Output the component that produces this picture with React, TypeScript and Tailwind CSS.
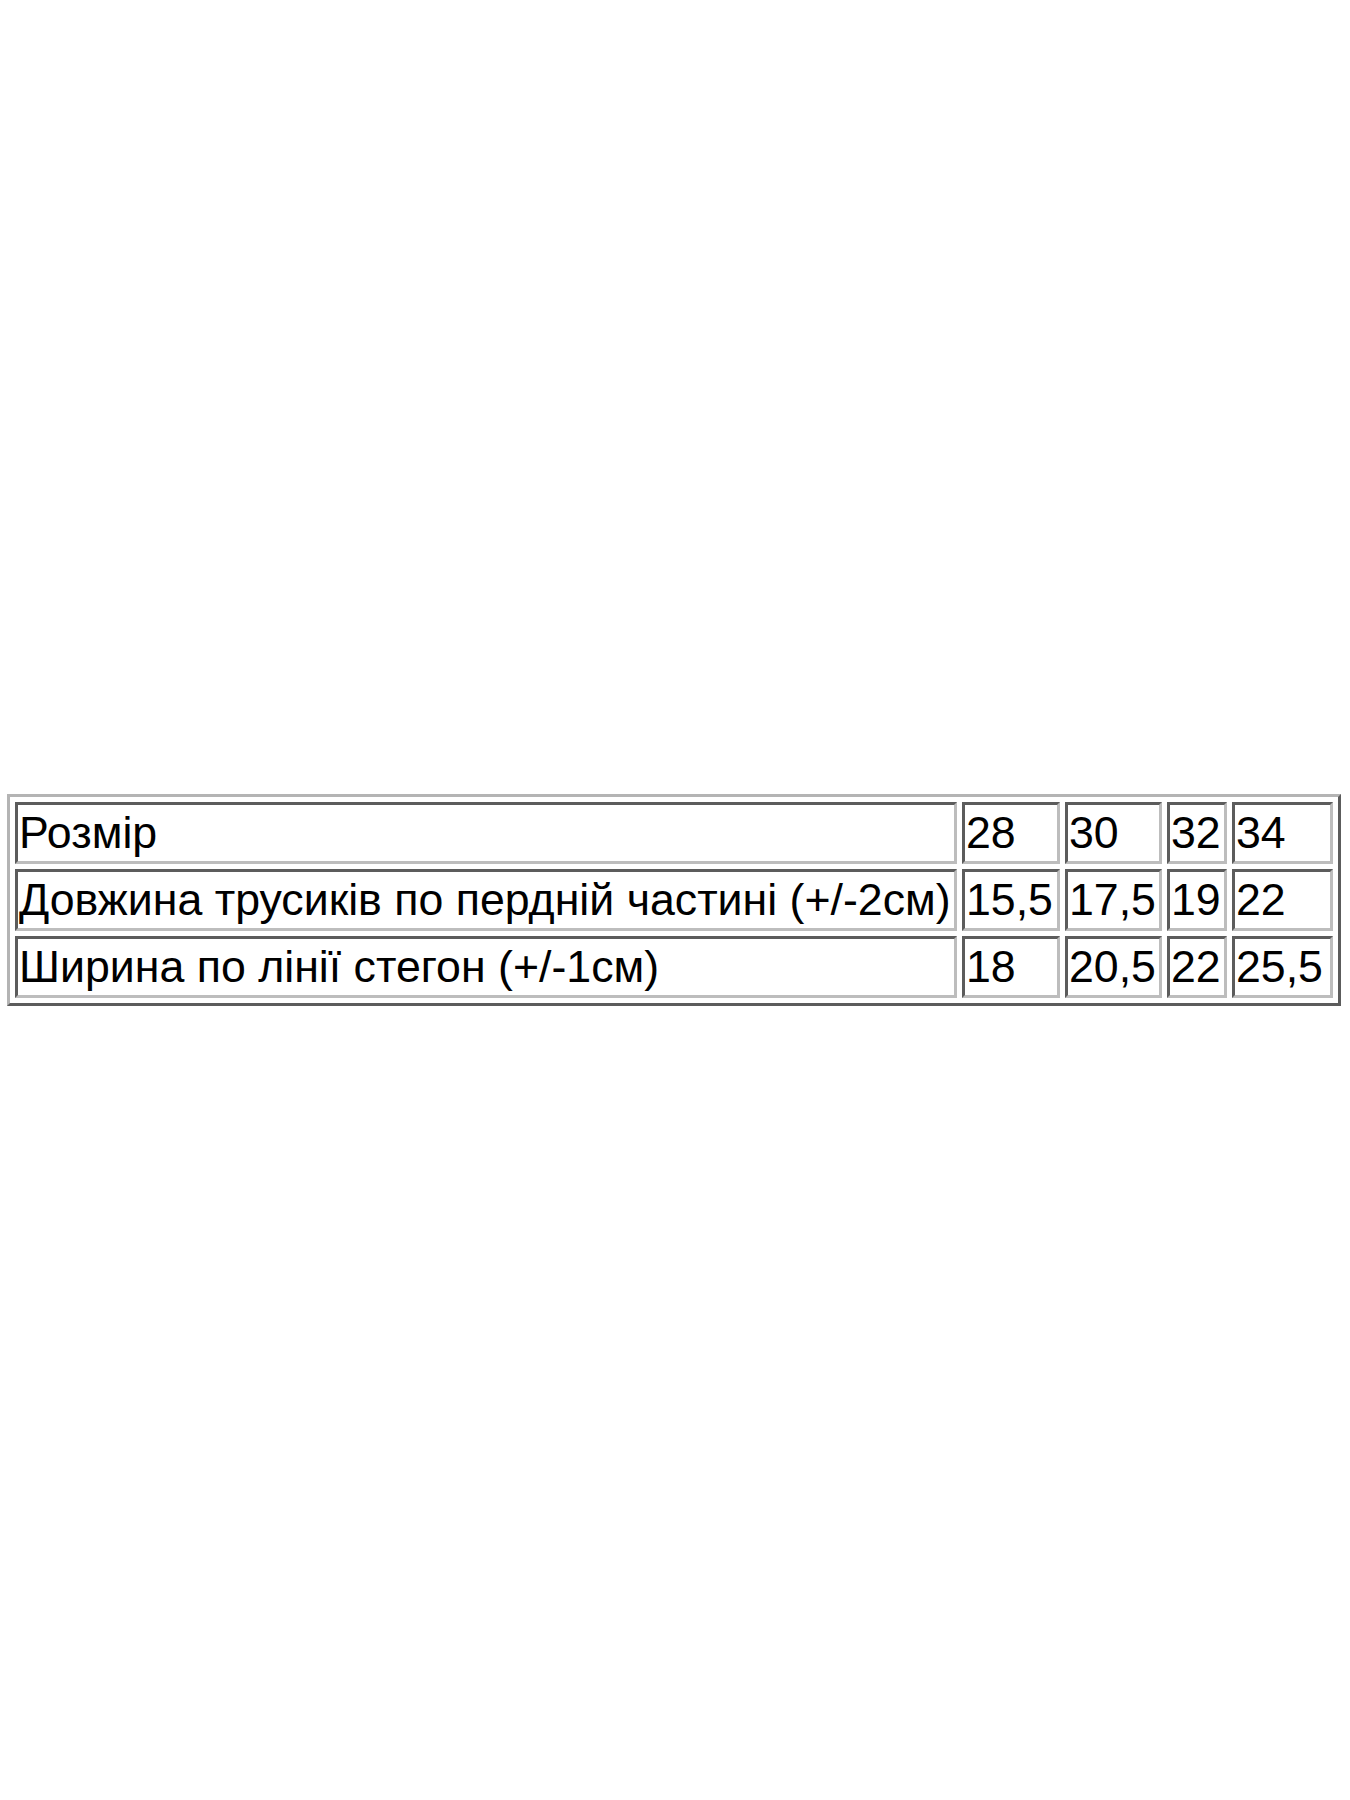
import React from "react";

const rows: string[][] = [
  ["Розмір", "28", "30", "32", "34"],
  ["Довжина трусиків по пердній частині (+/-2см)", "15,5", "17,5", "19", "22"],
  ["Ширина по лінії стегон (+/-1см)", "18", "20,5", "22", "25,5"],
];

const widths = ["w-[942px]", "w-[98px]", "w-[97px]", "w-[60px]", "w-[101px]"];

export default function App() {
  return (
    <div className="h-[1800px] w-[1350px] bg-white flex items-center">
      <table
        className="ml-[7px] border-separate border-spacing-[5px] border-[3px] border-t-[#b4b4b4] border-l-[#b4b4b4] border-r-[#5c5c5c] border-b-[#5c5c5c] text-black"
        style={{ fontFamily: '"Liberation Sans", Arial, sans-serif' }}
      >
        <tbody>
          {rows.map((r, i) => (
            <tr key={i}>
              {r.map((c, j) => (
                <td
                  key={j}
                  className={`${widths[j]} h-[62px] border-[3px] border-t-[#5c5c5c] border-l-[#5c5c5c] border-r-[#bdbdbd] border-b-[#bdbdbd] px-[1px] py-[2px] text-[44.7px] leading-[50px] whitespace-nowrap align-middle`}
                >
                  {c}
                </td>
              ))}
            </tr>
          ))}
        </tbody>
      </table>
    </div>
  );
}
